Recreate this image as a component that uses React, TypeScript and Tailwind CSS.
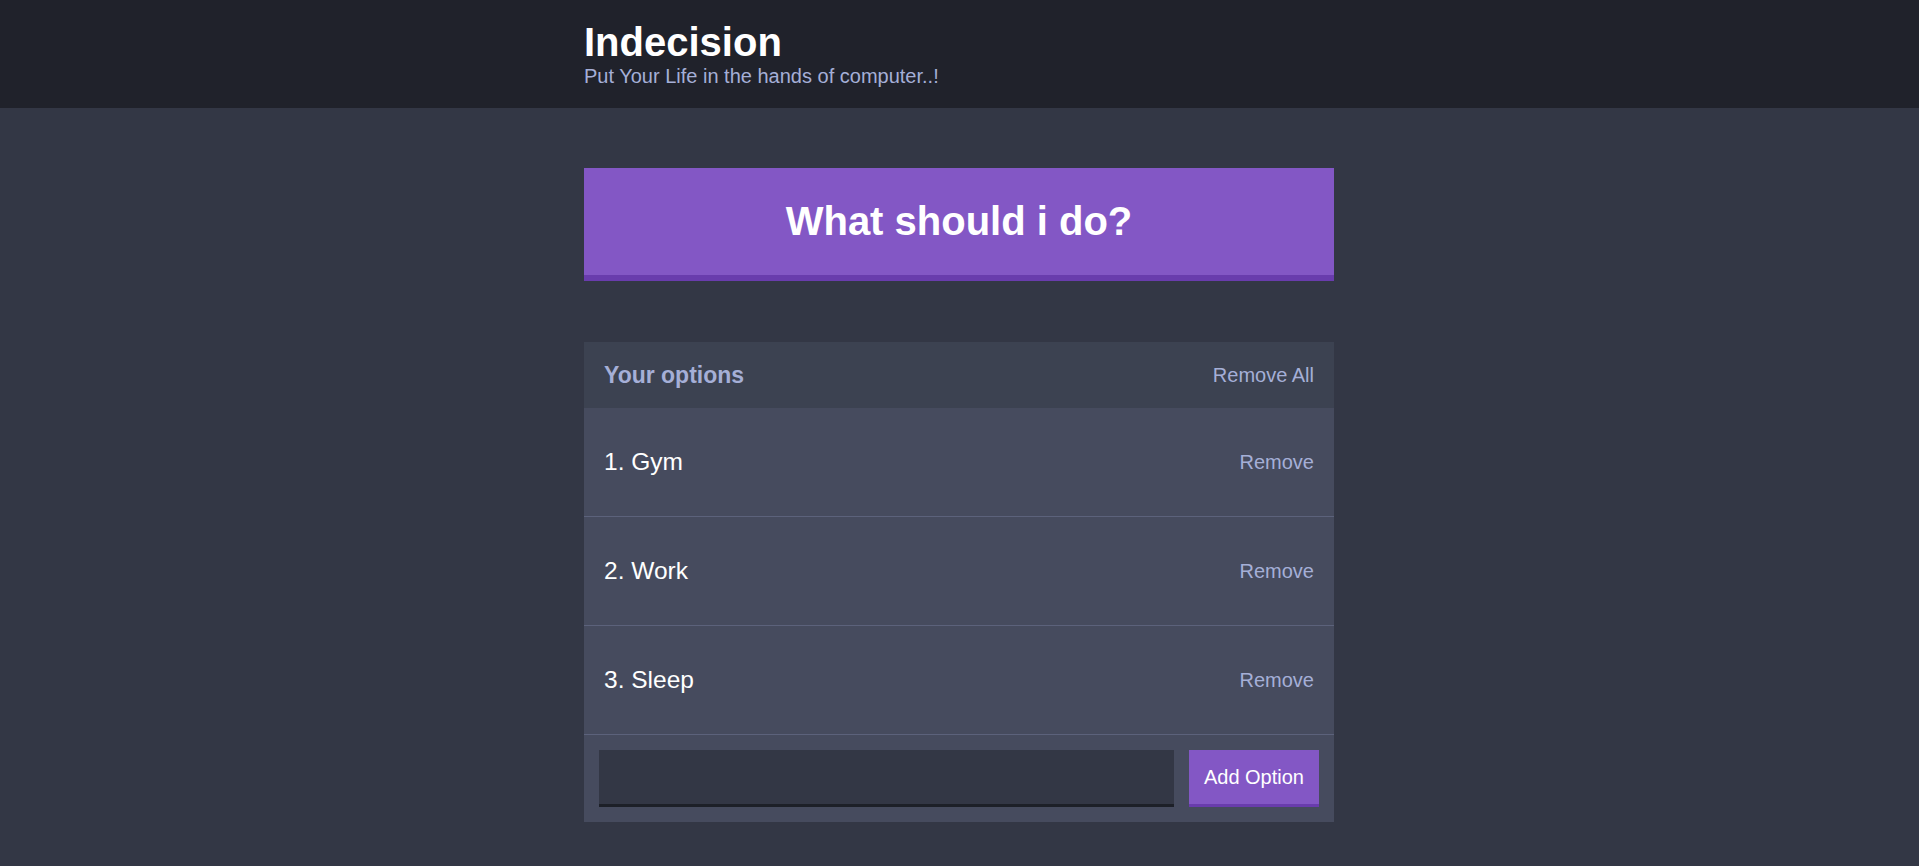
import React, { useState } from "react";

const FONT = "font-['Liberation_Sans',Arial,sans-serif]";

export default function App() {
    const [options, setOptions] = useState<string[]>(["Gym", "Work", "Sleep"]);
    const [draft, setDraft] = useState("");

    const addOption = (e: React.FormEvent) => {
        e.preventDefault();
        const value = draft.trim();
        if (!value) return;
        setOptions((prev) => [...prev, value]);
        setDraft("");
    };

    return (
        <div className={`min-h-screen bg-[#333745] ${FONT}`}>
            {/* Header */}
            <header className="bg-[#20222b] h-[108px] pt-[20px] mb-[60px] pr-px">
                <div className="w-[750px] mx-auto">
                    <h1 className="m-0 text-[40px] font-bold text-white leading-[normal]">Indecision</h1>
                    <h2 className="m-0 text-[20px] font-medium text-[#a5afd7] leading-[normal]">
                        Put Your Life in the hands of computer..!
                    </h2>
                </div>
            </header>

            <div className="pr-px">
                <div className="w-[750px] mx-auto">
                    <button className="w-full h-[113px] bg-[#8357c5] border-b-[6px] border-[#693cad] text-white font-bold text-[40px] leading-[normal] px-[30px] mb-[61px]">
                        What should i do?
                    </button>

                    <div className="bg-[#464b5e] mb-[60px]">
                        <div className="bg-[#3c4251] flex items-center justify-between px-[20px] h-[66px]">
                            <h3 className="m-0 text-[23px] font-bold text-[#a5afd7] leading-[normal]">Your options</h3>
                            <button
                                onClick={() => setOptions([])}
                                className="text-[20px] text-[#a5afd7] leading-[normal]"
                            >
                                Remove All
                            </button>
                        </div>

                        {options.map((option, i) => (
                            <div
                                key={option + i}
                                className="flex items-center justify-between px-[20px] h-[109px] border-b border-[#5c627b]"
                            >
                                <p className="m-0 text-[24.5px] font-medium text-white leading-[normal]">
                                    {i + 1}. {option}
                                </p>
                                <button
                                    onClick={() => setOptions((prev) => prev.filter((_, j) => j !== i))}
                                    className="text-[20px] text-[#a5afd7] leading-[normal]"
                                >
                                    Remove
                                </button>
                            </div>
                        ))}

                        <form onSubmit={addOption} className="flex p-[15px]">
                            <input
                                value={draft}
                                onChange={(e) => setDraft(e.target.value)}
                                className="flex-1 h-[57px] bg-[#333745] border-b-[3px] border-[#1d2028] text-[#a5afd7] text-[20px] leading-[normal] px-[15px] mr-[15px] outline-none"
                            />
                            <button className="h-[57px] bg-[#8357c5] border-b-[3px] border-[#693cad] text-white text-[20px] font-medium leading-[normal] px-[15px]">
                                Add Option
                            </button>
                        </form>
                    </div>
                </div>
            </div>
        </div>
    );
}
